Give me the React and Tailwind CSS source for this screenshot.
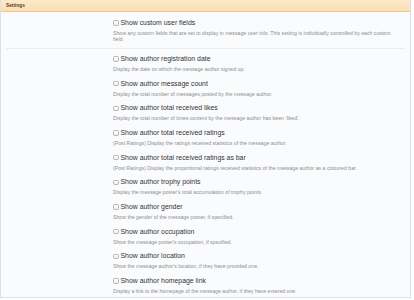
const OPTIONS = [
    ["Show author registration date", "Display the date on which the message author signed up."],
    ["Show author message count", "Display the total number of messages posted by the message author."],
    ["Show author total received likes", "Display the total number of times content by the message author has been 'liked'."],
    ["Show author total received ratings", "(Post Ratings) Display the ratings received statistics of the message author."],
    ["Show author total received ratings as bar", "(Post Ratings) Display the proportional ratings received statistics of the message author as a coloured bar."],
    ["Show author trophy points", "Display the message poster's total accumulation of trophy points."],
    ["Show author gender", "Show the gender of the message poster, if specified."],
    ["Show author occupation", "Show the message poster's occupation, if specified."],
    ["Show author location", "Show the message author's location, if they have provided one."],
    ["Show author homepage link", "Display a link to the homepage of the message author, if they have entered one."],
]

// Single checkbox option with its explanation underneath
function Option({ label, hint }) {
    return (
        <div className="flex flex-col w-[286px]">
            <label className="flex items-center gap-[2px] h-[10px] text-[6.9px] leading-[10px] text-[#333]">
                <span className="w-[5.5px] h-[5.5px] rounded-[1.5px] border-[0.6px] border-[#b4b4b4] bg-gradient-to-b from-white to-[#eeeeee] shrink-0" />
                {label}
            </label>
            <p className="mt-[2px] text-[5.2px] leading-[6px] text-[#8e8e8e]">{hint}</p>
        </div>
    )
}

export default function App() {
    return (
        <div className="w-[414px] h-[300px] bg-white" style={{ fontFamily: '"Liberation Sans", Arial, sans-serif' }}>
            <div className="w-[411px] h-[298px] border-x border-b border-[#d6e3ee] bg-[#fafbfd] flex flex-col">
                {/* Header bar */}
                <div className="h-[12px] shrink-0 bg-gradient-to-b from-[#fde9c9] to-[#fbdfb5] border-b border-[#f1c98f] px-[5px] flex items-center">
                    <h3 className="text-[4.8px] font-bold text-[#5b4126]">Settings</h3>
                </div>

                {/* Custom fields group */}
                <div className="mx-[5px] pt-[6px] pb-[6px] pl-[107px] border-b border-[#e6ecf2]">
                    <Option
                        label="Show custom user fields"
                        hint="Show any custom fields that are set to display in message user info. This setting is individually controlled by each custom field"
                    />
                </div>

                {/* Author info group */}
                <div className="pt-[5px] pl-[112px] flex flex-col gap-[6.67px]">
                    {OPTIONS.map(([label, hint]) => (
                        <Option key={label} label={label} hint={hint} />
                    ))}
                </div>
            </div>
        </div>
    )
}
